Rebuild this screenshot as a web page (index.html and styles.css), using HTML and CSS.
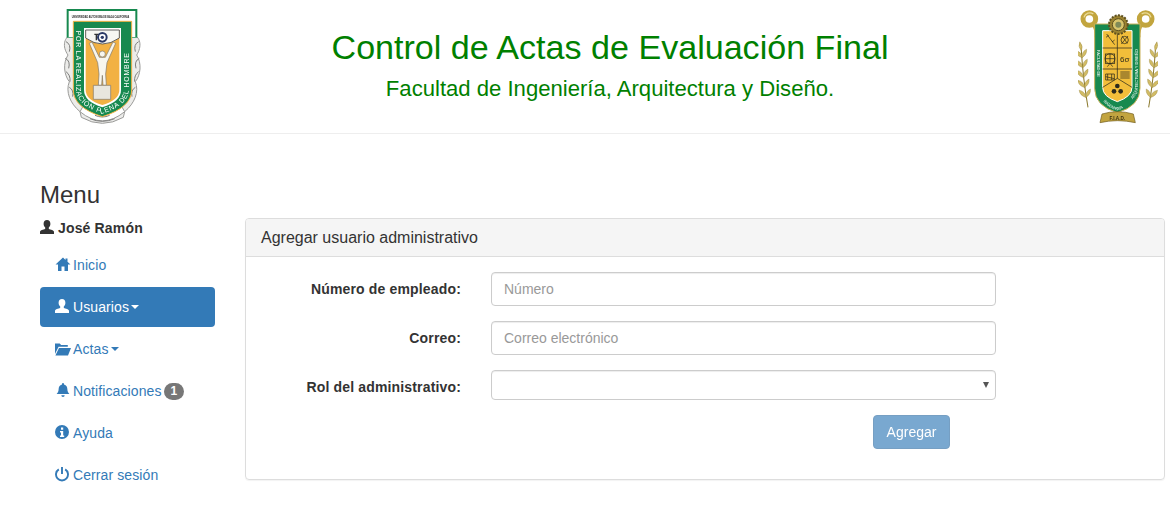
FILE: index.html
```html
<!DOCTYPE html>
<html>
<head>
    <meta charset="utf-8">
    <title>Control de Actas de Evaluación Final</title>
    <link rel="stylesheet" href="styles.css">
</head>
<body>
    <header class="page-header">
        <div class="logo-left">
            <svg class="logo" width="80" height="116" viewBox="66 24 240 348">
                <!-- side scrolls -->
                <g fill="#ececea" stroke="#9a9a98" stroke-width="3">
                    <path d="M100 100C70 110 66 140 84 165C68 190 72 225 88 245C76 275 90 310 120 335L140 300L100 110Z"/>
                    <path d="M274 100C304 110 306 140 290 165C306 190 302 225 286 245C298 275 284 310 254 335L234 300L274 110Z"/>
                    <path d="M120 335Q187 390 254 335L250 352Q187 388 124 352Z"/>
                </g>
                <g fill="none" stroke="#7f7f7d" stroke-width="3">
                    <path d="M78 125q16 8 10 30M76 175q16 8 10 30M78 215q14 10 12 30M88 262q14 8 10 28"/>
                    <path d="M296 125q-16 8-10 30M298 175q-16 8-10 30M296 215q-14 10-12 30M286 262q-14 8-10 28"/>
                    <path d="M150 356q37 16 74 0M165 346q22 10 44 0"/>
                </g>
                <!-- top frame -->
                <rect x="80" y="27" width="212" height="86" fill="#17894f"/>
                <rect x="86" y="33" width="200" height="78" fill="#fff"/>
                <text class="crest-top" transform="translate(95 55) scale(1 1.8)">UNIVERSIDAD AUTONOMA DE BAJA CALIFORNIA</text>
                <!-- shield -->
                <path d="M100 64H275V270Q275 322 187 350Q100 322 100 270Z" fill="#17894f" stroke="#f2b143" stroke-width="3"/>
                <path d="M132 84H243V270Q243 305 187 322Q132 305 132 270Z" fill="#fff"/>
                <path d="M137 90H238V270Q238 300 187 315Q137 300 137 270Z" fill="#f2b143"/>
                <path d="M137 90H238V114Q187 150 137 114Z" fill="#f7f7f2" stroke="#444" stroke-width="2.5"/>
                <!-- eye -->
                <circle cx="187" cy="112" r="13" fill="#fff" stroke="#2c3a66" stroke-width="6"/>
                <circle cx="187" cy="112" r="5" fill="#2c3a66"/>
                <path d="M163 103h12M169 103v18" fill="none" stroke="#333" stroke-width="4"/>
                <!-- figure -->
                <path d="M148 130L156 126L178 172H196L219 126L227 130L201 188L197 222L199 256H189L187 226L185 256H175L177 222L173 188Z" fill="#f8f6ee" stroke="#7d7668" stroke-width="2"/>
                <circle cx="187" cy="162" r="9" fill="#f8f6ee" stroke="#7d7668" stroke-width="2"/>
                <path d="M160 256H212V298H160Z" fill="#e8e6de" stroke="#7d7668" stroke-width="2"/>
                <!-- motto -->
                <path id="motto" d="M109 92V270Q109 316 187 341Q265 316 266 270V92" fill="none"/>
                <text class="crest-motto"><textPath href="#motto" textLength="515">POR LA REALIZACIÓN PLENA DEL HOMBRE</textPath></text>
            </svg>
        </div>
        <div class="titles">
            <h1>Control de Actas de Evaluación Final</h1>
            <h3>Facultad de Ingeniería, Arquitectura y Diseño.</h3>
        </div>
        <div class="logo-right">
            <svg class="logo" width="80" height="114" viewBox="54 30 240 342">
                <defs>
                    <g id="laurel">
                        <path d="M0 0Q-6 -85 -2 -175" fill="none" stroke="#8b7a2e" stroke-width="3"/>
                        <g fill="#d2bc66" stroke="#8b7a2e" stroke-width="1">
                            <path d="M-2 -170q-10-14-2-28q10 14 2 28z"/>
                            <path d="M-2 -150q-18-8-18-24q18 6 18 24z"/>
                            <path d="M-2 -150q16-8 16-24q-16 6-16 24z"/>
                            <path d="M-3 -120q-18-8-18-24q18 6 18 24z"/>
                            <path d="M-3 -120q16-8 16-24q-16 6-16 24z"/>
                            <path d="M-4 -90q-18-8-18-24q18 6 18 24z"/>
                            <path d="M-4 -90q16-8 16-24q-16 6-16 24z"/>
                            <path d="M-4 -60q-18-8-18-24q18 6 18 24z"/>
                            <path d="M-4 -60q16-8 16-24q-16 6-16 24z"/>
                            <path d="M-3 -30q-18-8-18-24q18 6 18 24z"/>
                            <path d="M-3 -30q16-8 16-24q-16 6-16 24z"/>
                        </g>
                    </g>
                </defs>
                <use href="#laurel" transform="translate(84 322) rotate(-6)"/>
                <use href="#laurel" transform="translate(266 322) scale(-1 1) rotate(-6)"/>
                <!-- rings -->
                <g fill="none" stroke="#c2a53e">
                    <circle cx="88" cy="57" r="19" stroke-width="15"/>
                    <circle cx="257" cy="57" r="19" stroke-width="15"/>
                    <path d="M100 70Q112 88 110 112M245 70Q233 88 235 112" stroke-width="13"/>
                </g>
                <g fill="none" stroke="#eadb96" stroke-width="4">
                    <path d="M72 52A18 18 0 0 1 100 42"/>
                    <path d="M273 52A18 18 0 0 0 245 42"/>
                </g>
                <!-- shield -->
                <path d="M104 72H240V265Q240 318 172 338Q104 318 104 265Z" fill="#17894f" stroke="#c9b25a" stroke-width="3"/>
                <path id="band-left" d="M111 150V262Q112 282 126 298" fill="none"/>
                <path id="band-bottom" d="M130 304Q150 326 172 331Q194 326 214 304" fill="none"/>
                <path id="band-right" d="M218 298Q232 282 233 262V126" fill="none"/>
                <text class="crest-band"><textPath href="#band-left">FACULTAD DE</textPath></text>
                <text class="crest-band"><textPath href="#band-bottom">INGENIERÍA</textPath></text>
                <text class="crest-band"><textPath href="#band-right">ARQUITECTURA Y DISEÑO</textPath></text>
                <path d="M128 92H216V262Q216 290 172 305Q128 290 128 262Z" fill="#f2be3a" stroke="#fff" stroke-width="3"/>
                <g fill="none" stroke="#2c2a1c" stroke-width="2.2">
                    <path d="M128 144H216M128 207H216M172 92V235M128 262L172 235L216 262"/>
                    <path d="M140 102L164 134M138 112l8-6M156 126l8-6"/>
                    <circle cx="194" cy="120" r="11"/>
                    <path d="M184 132l20-24M186 108l16 22"/>
                    <circle cx="150" cy="176" r="15"/>
                    <rect x="136" y="162" width="28" height="28"/>
                    <path d="M150 162v28M137 176h26M150 190l-8 10M150 190l8 10"/>
                    <path d="M137 222h26v18h-26zM137 230l26 6M143 222v18M155 222v18"/>
                    <path d="M181 216h28M181 222h28M181 228h28M181 234h28"/>
                </g>
                <text class="crest-six" x="194" y="187" text-anchor="middle">6σ</text>
                <g fill="#2c2a1c">
                    <circle cx="172" cy="258" r="7"/>
                    <circle cx="162" cy="274" r="7"/>
                    <circle cx="182" cy="274" r="7"/>
                </g>
                <!-- gear -->
                <circle cx="175" cy="74" r="28" fill="#9a8230" stroke="#5f5120" stroke-width="6" stroke-dasharray="6 4"/>
                <circle cx="175" cy="74" r="18" fill="#d8c56c" stroke="#5f5120" stroke-width="3"/>
                <circle cx="175" cy="74" r="9" fill="#7e8a58"/>
                <!-- ribbon -->
                <path d="M126 342Q172 328 220 342L226 368Q172 356 120 368Z" fill="#c2a440" stroke="#6e5a1e" stroke-width="2"/>
                <text class="crest-ribbon" x="172" y="360" text-anchor="middle">F.I.A.D.</text>
            </svg>
        </div>
    </header>

    <main class="page-body">
        <nav class="sidebar">
            <h3>Menu</h3>
            <p class="user-name">
                <svg class="icon" viewBox="1 1 16 16"><path d="M8 1c2.2 0 3.4 1.6 3.4 3.8 0 1.6-.7 3-1.6 3.8v1.2c0 .5 4.7 1 5.2 3V15H1v-2.2c.5-2 5.2-2.5 5.2-3V8.6C5.3 7.8 4.6 6.4 4.6 4.8 4.6 2.6 5.8 1 8 1z"/></svg>
                José Ramón
            </p>
            <ul class="nav-pills">
                <li><a href="#">
                    <svg class="icon" viewBox="0 1 16 16"><path d="M8 1.5.5 8.5H3V15h3.5v-4.5h3V15H13V8.5h2.5l-3-2.8V2.5h-2v1.4z"/></svg>
                    Inicio
                </a></li>
                <li class="active"><a href="#">
                    <svg class="icon" viewBox="1 1 16 16"><path d="M8 1c2.2 0 3.4 1.6 3.4 3.8 0 1.6-.7 3-1.6 3.8v1.2c0 .5 4.7 1 5.2 3V15H1v-2.2c.5-2 5.2-2.5 5.2-3V8.6C5.3 7.8 4.6 6.4 4.6 4.8 4.6 2.6 5.8 1 8 1z"/></svg>
                    Usuarios<span class="caret"></span>
                </a></li>
                <li><a href="#">
                    <svg class="icon" viewBox="0 0 16 16"><path d="M0 2.5h4.7l1.4 1.4h6.7V5.7H3.6L0 13zM4 7h12l-3 7.5H.4z"/></svg>
                    Actas<span class="caret"></span>
                </a></li>
                <li><a href="#">
                    <svg class="icon" viewBox="0 1 16 16"><path d="M8 1a1 1 0 0 1 1 1v.6c2.4.5 3.4 2.6 3.4 5 0 2 .8 3.2 2 4.4H1.6c1.2-1.2 2-2.4 2-4.4 0-2.4 1-4.5 3.4-5V2a1 1 0 0 1 1-1zM6.3 13.2h3.4a1.7 1.7 0 0 1-3.4 0z"/></svg>
                    Notificaciones<span class="badge">1</span>
                </a></li>
                <li><a href="#">
                    <svg class="icon" viewBox="1 1 16 16"><path fill-rule="evenodd" d="M8 1a7 7 0 1 0 0 14A7 7 0 0 0 8 1zM7 3.5h2.2v2.2H7zM6 7h3.2v4.5h1V13H6v-1.5h1V8.5H6z"/></svg>
                    Ayuda
                </a></li>
                <li><a href="#">
                    <svg class="icon icon-line" viewBox="1 1 16 16"><path d="M4.8 3.4a6 6 0 1 0 6.4 0M8 1v7"/></svg>
                    Cerrar sesión
                </a></li>
            </ul>
        </nav>

        <section class="panel">
            <div class="panel-heading">Agregar usuario administrativo</div>
            <form class="panel-body">
                <div class="form-group">
                    <label for="numero">Número de empleado:</label>
                    <input id="numero" type="text" placeholder="Número">
                </div>
                <div class="form-group">
                    <label for="correo">Correo:</label>
                    <input id="correo" type="text" placeholder="Correo electrónico">
                </div>
                <div class="form-group">
                    <label class="select-label" for="rol">Rol del administrativo:</label>
                    <div class="select-wrap">
                        <select id="rol"><option></option></select>
                    </div>
                </div>
                <div class="form-group">
                    <button type="button" class="btn" disabled>Agregar</button>
                </div>
            </form>
        </section>
    </main>
</body>
</html>
```

FILE: styles.css
```css
* {
    box-sizing: border-box;
}
body {
    font-family: "Liberation Sans", Arial, sans-serif;
    font-size: 14px;
    line-height: 20px;
    color: #333;
    background: #fff;
    margin: 0;
}

/* Header */
.page-header {
    display: grid;
    grid-template-columns: 205px 1fr 155px;
    height: 134px;
    border-bottom: 1px solid #eee;
}
.logo {
    display: block;
    filter: blur(.3px);
}
.logo-left {
    padding: 8px 0 0 62px;
}
.logo-right {
    padding: 10px 0 0 63px;
}
.titles {
    text-align: center;
    color: green;
    padding-top: 27px;
}
.titles h1 {
    font-size: 34.1px;
    font-weight: 400;
    line-height: 40px;
    margin: 0;
}
.titles h3 {
    font-size: 22.1px;
    font-weight: 400;
    line-height: 24px;
    margin: 10px 0 0;
}

/* Crest text */
.crest-top {
    font-size: 7.2px;
    font-weight: 700;
    fill: #2a2a2a;
}
.crest-motto {
    font-size: 21px;
    fill: #fff;
}
.crest-band {
    font-size: 12px;
    fill: #fff;
}
.crest-six {
    font-size: 24px;
    fill: #2c2a1c;
}
.crest-ribbon {
    font-size: 14px;
    font-weight: 700;
    fill: #3d3210;
}

/* Page */
.page-body {
    display: grid;
    grid-template-columns: 175px 920px;
    column-gap: 30px;
    padding: 48px 0 0 40px;
}

/* Sidebar */
.sidebar h3 {
    font-size: 24px;
    font-weight: 400;
    line-height: 26px;
    margin: 0;
}
.icon {
    width: 16px;
    height: 16px;
    margin-right: 2px;
    fill: currentColor;
    flex: none;
}
.icon-line {
    fill: none;
    stroke: currentColor;
    stroke-width: 1.9;
}
.user-name {
    display: flex;
    align-items: center;
    font-weight: 700;
    letter-spacing: .16px;
    margin: 10px 0 7px;
}
.nav-pills {
    list-style: none;
    margin: 0;
    padding: 0;
}
.nav-pills li + li {
    margin-top: 2px;
}
.nav-pills a {
    display: flex;
    align-items: center;
    height: 40px;
    padding: 0 15px;
    border-radius: 4px;
    color: #337ab7;
    letter-spacing: .1px;
    text-decoration: none;
}
.nav-pills .active a {
    background: #337ab7;
    color: #fff;
}
.caret {
    display: inline-block;
    margin-left: 2px;
    border-top: 4px solid;
    border-left: 4px solid transparent;
    border-right: 4px solid transparent;
}
.badge {
    min-width: 10px;
    margin-left: 2px;
    padding: 3px 7px;
    font-size: 12px;
    font-weight: 700;
    line-height: 11px;
    color: #fff;
    background: #777;
    border-radius: 10px;
}

/* Panel */
.panel {
    align-self: start;
    height: 262px;
    margin-top: 36px;
    border: 1px solid #ddd;
    border-radius: 4px;
    box-shadow: 0 1px 1px rgba(0,0,0,.05);
}
.panel-heading {
    height: 38px;
    padding: 10px 15px;
    font-size: 16px;
    line-height: 18px;
    background: #f5f5f5;
    border-bottom: 1px solid #ddd;
    border-radius: 3px 3px 0 0;
}
.panel-body {
    display: flex;
    flex-direction: column;
    gap: 15px;
    padding-top: 15px;
}
.form-group {
    display: grid;
    grid-template-columns: 215px 505px;
    column-gap: 30px;
    align-items: center;
}
.form-group label {
    font-weight: 700;
    letter-spacing: .16px;
    text-align: right;
}
.form-group .select-label {
    padding-top: 4px;
}
.form-group input, .form-group select {
    display: block;
    font-family: inherit;
    font-size: 14px;
    color: #555;
    background-color: #fff;
    width: 100%;
    border: 1px solid #ccc;
    border-radius: 4px;
    box-shadow: inset 0 1px 1px rgba(0,0,0,.075);
}
.form-group input {
    height: 34px;
    padding: 6px 12px;
}
.form-group select {
    appearance: none;
    height: 30px;
    padding: 4px 8px;
}
.select-wrap {
    position: relative;
}
.select-wrap::after {
    content: "";
    position: absolute;
    top: 12px;
    right: 7px;
    border-top: 6px solid #555;
    border-left: 3px solid transparent;
    border-right: 3px solid transparent;
}
input::placeholder {
    color: #999;
    opacity: 1;
}
.btn {
    grid-column: 2;
    justify-self: end;
    margin-right: 46px;
    width: 77px;
    height: 34px;
    font-family: inherit;
    font-size: 14px;
    color: #fff;
    background: #337ab7;
    border: 1px solid #2e6da4;
    border-radius: 4px;
    opacity: .65;
}
```
